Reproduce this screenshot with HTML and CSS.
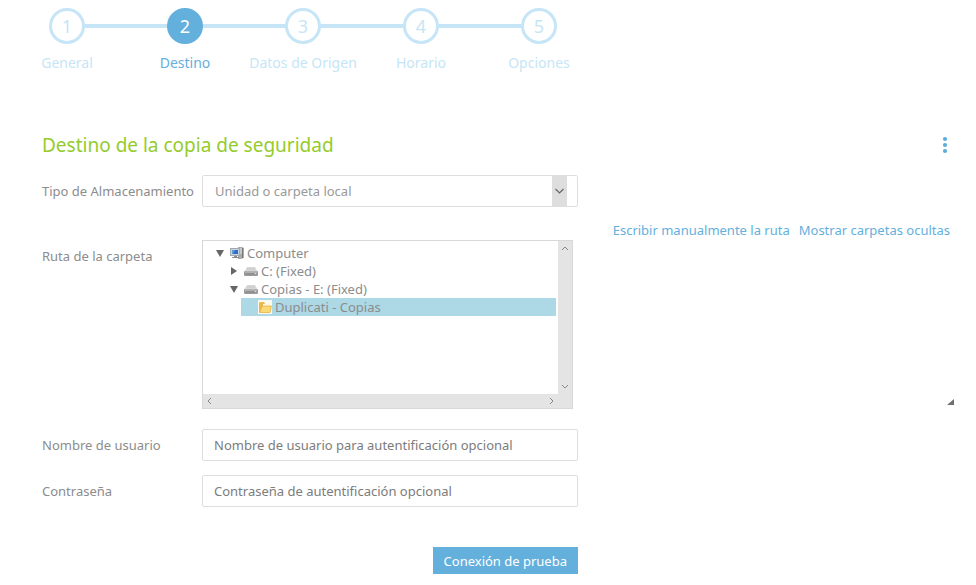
FILE: index.html
```html
<!DOCTYPE html>
<html lang="es">
<head>
<meta charset="utf-8">
<title>Destino de la copia de seguridad</title>
<link rel="stylesheet" href="styles.css">
</head>
<body>
<svg class="defs" aria-hidden="true">
  <symbol id="drive" viewBox="0 0 14 12">
    <path d="M3 2h8l3 5H0z" fill="#dedede"/>
    <path d="M3.5 2.5h7l1.5 3H2z" fill="#d0d0d0"/>
    <rect x="0" y="6" width="14" height="5" rx="1" fill="#9b9b9b"/>
    <path d="M1 7h12" stroke="#c9c9c9"/>
    <path d="M2 9h8" stroke="#858585"/>
    <rect x="11" y="8" width="1" height="1" fill="#e4e4e4"/>
  </symbol>
  <symbol id="down" viewBox="0 0 10 10"><path d="M1 2h8L5 9z" fill="#666"/></symbol>
  <symbol id="right" viewBox="0 0 10 10"><path d="M2 1v8l6-4z" fill="#666"/></symbol>
</svg>

<nav>
  <ol class="steps">
    <li class="step"><span class="circle">1</span><span class="name">General</span></li>
    <li class="step current" aria-current="step"><span class="circle">2</span><span class="name">Destino</span></li>
    <li class="step"><span class="circle">3</span><span class="name">Datos de Origen</span></li>
    <li class="step"><span class="circle">4</span><span class="name">Horario</span></li>
    <li class="step"><span class="circle">5</span><span class="name">Opciones</span></li>
  </ol>
</nav>

<main>
  <header class="heading">
    <h1>Destino de la copia de seguridad</h1>
    <button class="more" type="button" aria-label="Menú">
      <svg width="6" height="18" viewBox="0 0 6 18" fill="#5aaddc"><circle cx="3" cy="3" r="2.1"/><circle cx="3" cy="9" r="2.1"/><circle cx="3" cy="15" r="2.1"/></svg>
    </button>
  </header>

  <form>
    <div class="row">
      <label for="type">Tipo de Almacenamiento</label>
      <div class="select">
        <select id="type"><option>Unidad o carpeta local</option></select>
        <svg class="arrow" viewBox="0 0 14 30"><path d="M3 13l4 4 4-4" fill="none" stroke="#666" stroke-width="1.2"/></svg>
      </div>
    </div>

    <div class="links">
      <a href="#manual">Escribir manualmente la ruta</a>
      <a href="#hidden">Mostrar carpetas ocultas</a>
    </div>

    <div class="row path">
      <span class="label" id="path-label">Ruta de la carpeta</span>
      <div class="resizable">
        <div class="browser">
          <ul class="tree" role="tree" aria-labelledby="path-label">
            <li role="treeitem" aria-expanded="true">
              <div class="node">
                <svg class="toggle"><use href="#down"/></svg>
                <svg class="icon" viewBox="0 0 14 14">
                  <path d="M8 1h4l2 1v10l-3 1H8z" fill="#a9a9a9"/>
                  <path d="M9 3h3M9 5h3M9 7h3" stroke="#e8e8e8"/>
                  <path d="M12.5 2v10" stroke="#777"/>
                  <rect x="0.5" y="2.5" width="9" height="7" fill="#c9d2dc" stroke="#a4a9b0"/>
                  <rect x="2" y="4" width="6" height="4" fill="#2c6fc4"/>
                  <path d="M2 4h3L3 8H2z" fill="#5d9ae0"/>
                  <path d="M4 10h3v1h2v1H2v-1h2z" fill="#8c8c8c"/>
                </svg>
                Computer
              </div>
              <ul role="group">
                <li role="treeitem" aria-expanded="false">
                  <div class="node"><svg class="toggle"><use href="#right"/></svg><svg class="icon"><use href="#drive"/></svg>C: (Fixed)</div>
                </li>
                <li role="treeitem" aria-expanded="true">
                  <div class="node"><svg class="toggle"><use href="#down"/></svg><svg class="icon"><use href="#drive"/></svg>Copias - E: (Fixed)</div>
                  <ul role="group">
                    <li role="treeitem" aria-selected="true">
                      <div class="node selected">
                        <span class="toggle"></span>
                        <svg class="icon" viewBox="0 0 14 14">
                          <rect width="14" height="14" fill="#fbf8ee"/>
                          <path d="M1 3l1-1h4l1 2h5v8H1z" fill="#e9b94d"/>
                          <path d="M5 4h7v3H5z" fill="#fff8dc"/>
                          <path d="M4 6h9.5L12 12.5H1.5z" fill="#fbd977" stroke="#e3ab3a" stroke-width=".7"/>
                        </svg>
                        Duplicati - Copias
                      </div>
                    </li>
                  </ul>
                </li>
              </ul>
            </li>
          </ul>
          <div class="bar vertical">
            <button type="button" aria-label="Subir"><svg viewBox="0 0 8 8"><path d="M1 6l3-3 3 3"/></svg></button>
            <button type="button" aria-label="Bajar"><svg viewBox="0 0 8 8"><path d="M1 2l3 3 3-3"/></svg></button>
          </div>
          <div class="bar horizontal">
            <button type="button" aria-label="Izquierda"><svg viewBox="0 0 8 8"><path d="M5 1L2 4l3 3"/></svg></button>
            <button type="button" aria-label="Derecha"><svg viewBox="0 0 8 8"><path d="M3 1l3 3-3 3"/></svg></button>
          </div>
          <div class="corner"></div>
        </div>
        <svg class="grip" viewBox="0 0 8 8"><path d="M8 1v6H1z" fill="#707070"/></svg>
      </div>
    </div>

    <div class="row">
      <label for="user">Nombre de usuario</label>
      <input id="user" type="text" placeholder="Nombre de usuario para autentificación opcional">
    </div>
    <div class="row">
      <label for="password">Contraseña</label>
      <input id="password" type="password" placeholder="Contraseña de autentificación opcional">
    </div>
    <div class="actions"><button class="test" type="button">Conexión de prueba</button></div>
  </form>
</main>
</body>
</html>
```
FILE: styles.css
```css
* {
  box-sizing: border-box;
}

body {
  margin: 0;
  padding: 8px;
  background: #fff;
  color: #8c8c8c;
  font: 13px/18px "Noto Sans", sans-serif;
}

.defs {
  position: absolute;
  width: 0;
  height: 0;
}

ul,
ol {
  margin: 0;
  padding: 0;
  list-style: none;
}

.steps {
  display: grid;
  grid-template-columns: repeat(5, 118px);
}

.step {
  position: relative;
  display: flex;
  flex-direction: column;
  align-items: center;
  gap: 10px;
  color: #c6e5f6;
  font-size: 14px;
  white-space: nowrap;
}

.step + .step::before {
  content: "";
  position: absolute;
  top: 16px;
  right: 50%;
  width: 100%;
  height: 4px;
  background: #c6e5f6;
}

.circle {
  position: relative;
  z-index: 1;
  width: 36px;
  height: 36px;
  border: 3px solid #c6e5f6;
  border-radius: 50%;
  background: #fff;
  font-size: 18px;
  line-height: 30px;
  text-align: center;
}

.current {
  color: #64b0dd;
}

.current .circle {
  border-color: #64b0dd;
  background: #64b0dd;
  color: #fff;
}

main {
  padding: 57px 14px 0 34px;
}

.heading {
  display: flex;
  align-items: center;
  justify-content: space-between;
  height: 32px;
}

h1 {
  margin: 0;
  color: #94cc2b;
  font-size: 19px;
  font-weight: 400;
  line-height: 32px;
}

.more {
  display: flex;
  padding: 0 6px;
  border: 0;
  background: none;
}

form {
  display: flex;
  flex-direction: column;
  padding-top: 14px;
}

.row {
  display: grid;
  grid-template-columns: 160px minmax(0, 1fr);
  align-items: center;
  margin-bottom: 14px;
}

.select {
  position: relative;
  width: 376px;
}

select,
input {
  width: 376px;
  height: 32px;
  padding: 0 11px;
  border: 1px solid #dedede;
  border-radius: 2px;
  background: #fff;
  color: #8c8c8c;
  font: inherit;
}

select {
  display: block;
  padding: 0 12px;
  appearance: none;
  color: #999;
}

input::placeholder {
  color: #7c7c7c;
  opacity: 1;
}

.arrow {
  position: absolute;
  top: 1px;
  right: 11px;
  width: 15px;
  height: 30px;
  background: #dedede;
  pointer-events: none;
}

.links {
  display: flex;
  justify-content: flex-end;
  gap: 9px;
  padding-right: 4px;
  line-height: 19px;
}

a {
  color: #64b0dd;
  text-decoration: none;
}

.path {
  align-items: start;
  margin-bottom: 20px;
}

.path .label {
  padding-top: 7px;
}

.resizable {
  display: flex;
  align-items: flex-end;
  justify-content: space-between;
}

.browser {
  display: grid;
  grid-template-columns: minmax(0, 1fr) 14px;
  grid-template-rows: 153px 14px;
  width: 371px;
  border: 1px solid #d8d8d8;
}

.tree {
  padding: 3px 2px 0 10px;
}

.tree ul {
  padding-left: 14px;
}

.node {
  display: flex;
  align-items: center;
  height: 18px;
  gap: 3px;
}

.selected {
  background: #add8e6;
}

.toggle {
  width: 14px;
  height: 10px;
}

.icon {
  width: 14px;
  height: 14px;
}

.bar {
  display: flex;
  justify-content: space-between;
  background: #e4e4e4;
}

.vertical {
  flex-direction: column;
}

.horizontal {
  grid-column: 1;
}

.corner {
  background: #e4e4e4;
}

.bar button {
  display: flex;
  align-items: center;
  justify-content: center;
  width: 14px;
  height: 14px;
  padding: 0;
  border: 0;
  background: none;
}

.bar svg {
  width: 8px;
  height: 8px;
  fill: none;
  stroke: #888;
}

.grip {
  width: 8px;
  height: 8px;
  margin-bottom: 3px;
}

.actions {
  display: flex;
  justify-content: flex-end;
  width: 536px;
  padding-top: 26px;
}

.test {
  height: 27px;
  padding: 0 11px;
  border: 0;
  background: #64b0dd;
  color: #fff;
  font: inherit;
}
```
